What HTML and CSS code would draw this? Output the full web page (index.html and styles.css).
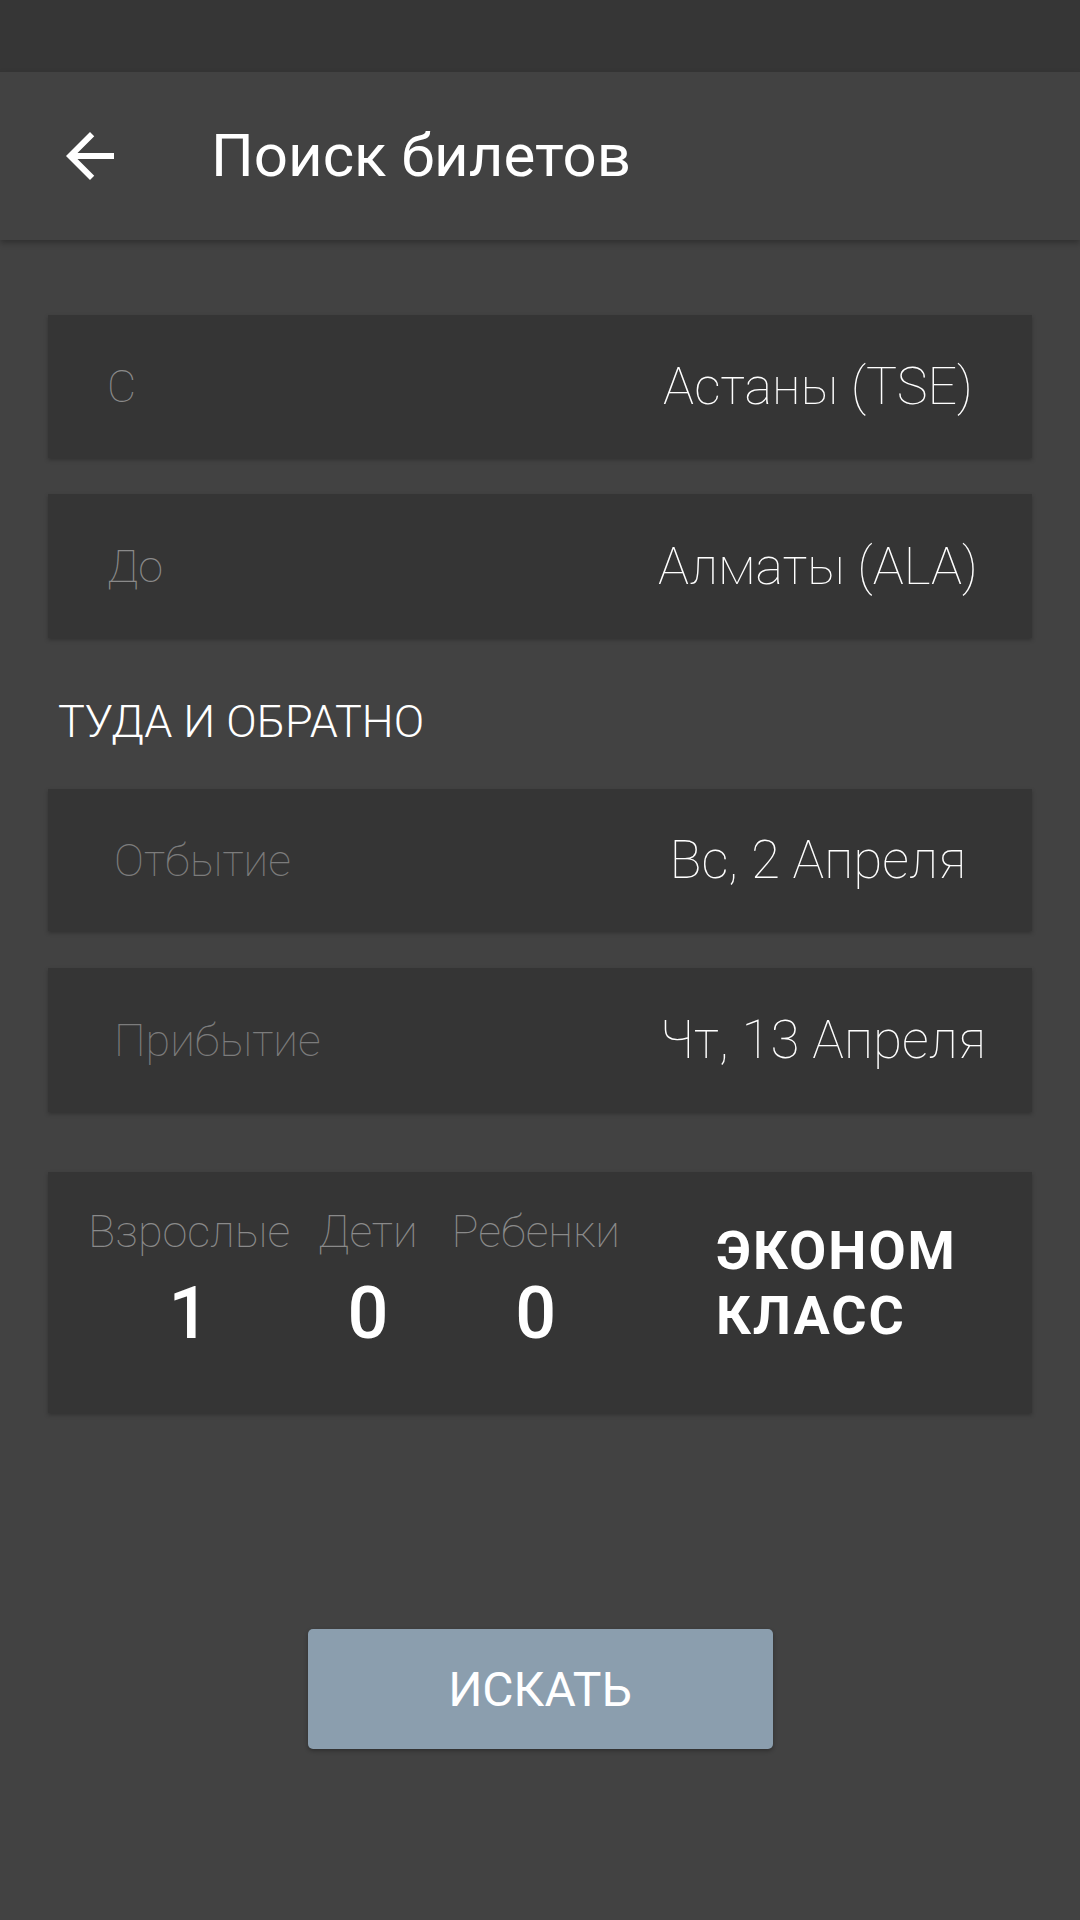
FILE: index.html
```html
<!DOCTYPE html>
<html lang="ru">
<head>
<meta charset="utf-8">
<title>Поиск билетов</title>
<link rel="stylesheet" href="styles.css">
</head>
<body>
<div class="status-bar"></div>
<header class="app-bar">
  <svg class="back" viewBox="0 0 24 24" width="72" height="72"><path d="M20 11H7.83l5.59-5.59L12 4l-8 8 8 8 1.41-1.41L7.83 13H20v-2z" fill="#ffffff"/></svg>
  <h1 class="title">Поиск билетов</h1>
</header>
<main class="content">
  <div class="card field card-1">
    <span class="label">С</span>
    <span class="value city">Астаны (TSE)</span>
  </div>
  <div class="card field card-2">
    <span class="label">До</span>
    <span class="value city">Алматы (ALA)</span>
  </div>
  <div class="section-title">ТУДА И ОБРАТНО</div>
  <div class="card field card-3 date-field">
    <span class="label">Отбытие</span>
    <span class="value date">Вс, 2 Апреля</span>
  </div>
  <div class="card field card-4 date-field">
    <span class="label">Прибытие</span>
    <span class="value date date-wide">Чт, 13 Апреля</span>
  </div>
  <div class="card passengers">
    <div class="pax-col pax-adults">
      <span class="pax-label">Взрослые</span>
      <span class="pax-num">1</span>
    </div>
    <div class="pax-col pax-children">
      <span class="pax-label">Дети</span>
      <span class="pax-num">0</span>
    </div>
    <div class="pax-col pax-infants">
      <span class="pax-label">Ребенки</span>
      <span class="pax-num">0</span>
    </div>
    <div class="class-name">ЭКОНОМ<br>КЛАСС</div>
  </div>
  <button class="search-btn">ИСКАТЬ</button>
</main>
</body>
</html>
```

FILE: styles.css
```css
html, body {
  margin: 0;
  padding: 0;
}
body {
  width: 1080px;
  height: 1920px;
  background: #424242;
  font-family: Roboto, "Noto Sans", "Liberation Sans", sans-serif;
  color: #ffffff;
  overflow: hidden;
}
.status-bar {
  height: 72px;
  background: #363636;
}
.app-bar {
  position: relative;
  z-index: 2;
  height: 168px;
  background: #424242;
  display: flex;
  align-items: center;
  box-shadow: 0 3px 6px rgba(0, 0, 0, 0.28);
}
.back {
  display: block;
  margin-left: 54px;
  flex: none;
}
.title {
  margin: 0 0 0 85px;
  font-size: 60px;
  font-weight: 400;
  color: #ffffff;
  line-height: 1;
}
.content {
  padding: 0 48px;
  display: flex;
  flex-direction: column;
}
.card {
  background: #353535;
  box-shadow: 0 2px 4px rgba(0, 0, 0, 0.25);
}
.field {
  height: 143px;
  display: flex;
  align-items: center;
  padding-left: 59px;
}
.date-field {
  padding-left: 66px;
}
.card-1 { margin-top: 75px; }
.card-2 { margin-top: 36px; height: 144px; }
.card-3 { margin-top: 41px; height: 142px; }
.card-4 { margin-top: 37px; height: 144px; }
.label {
  font-family: "Roboto Thin", "Roboto Light", Roboto, sans-serif;
  font-size: 45px;
  font-weight: 100;
  color: #8a8a8a;
  flex: 1;
}
.date-field .label {
  color: #7c7c7c;
}
.value {
  font-family: "Roboto Thin", "Roboto Light", Roboto, sans-serif;
  width: 400px;
  margin-right: 14px;
  text-align: center;
  font-weight: 100;
  color: #ffffff;
}
.city {
  font-size: 52px;
}
.date {
  font-size: 53px;
}
.date-wide {
  margin-right: 0;
  width: 418px;
}
.section-title {
  font-family: "Roboto Light", Roboto, sans-serif;
  margin-top: 58px;
  padding-left: 10px;
  font-size: 45px;
  font-weight: 300;
  color: #ffffff;
  line-height: 52px;
}
.passengers {
  margin-top: 60px;
  height: 241px;
  box-sizing: border-box;
  padding: 34px 0 0 40px;
  display: flex;
  align-items: flex-start;
}
.pax-col {
  display: flex;
  flex-direction: column;
  align-items: center;
}
.pax-adults {
  margin-right: 28px;
}
.pax-children {
  margin-right: 34px;
}
.pax-label {
  font-family: "Roboto Thin", "Roboto Light", Roboto, sans-serif;
  font-size: 45px;
  font-weight: 100;
  color: #8a8a8a;
  line-height: 52px;
}
.pax-num {
  margin-top: 14px;
  font-size: 72px;
  font-weight: 500;
  line-height: 84px;
  color: #ffffff;
}
.class-name {
  margin-left: 96px;
  margin-top: 12px;
  font-size: 54px;
  font-weight: 700;
  line-height: 65px;
  color: #ffffff;
  letter-spacing: 2px;
}
.search-btn {
  align-self: center;
  margin-top: 216px;
  width: 465px;
  height: 120px;
  border: none;
  border-radius: 5px;
  background: #8b9eae;
  color: #ffffff;
  font-family: Roboto, "Noto Sans", "Liberation Sans", sans-serif;
  font-size: 48px;
  font-weight: 400;
  box-shadow: 0 2px 4px rgba(0, 0, 0, 0.3);
  padding: 0;
}
```
